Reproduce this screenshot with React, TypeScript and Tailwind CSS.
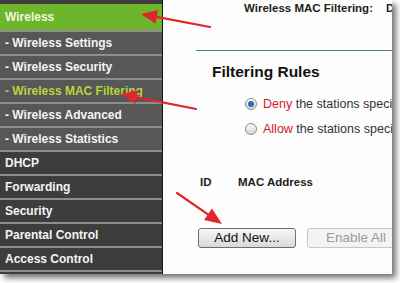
import { FC } from "react";

type Row = { label: string; kind: "sub" | "subActive" | "top" };

const rows: Row[] = [
  { label: "- Wireless Settings", kind: "sub" },
  { label: "- Wireless Security", kind: "sub" },
  { label: "- Wireless MAC Filtering", kind: "subActive" },
  { label: "- Wireless Advanced", kind: "sub" },
  { label: "- Wireless Statistics", kind: "sub" },
  { label: "DHCP", kind: "top" },
  { label: "Forwarding", kind: "top" },
  { label: "Security", kind: "top" },
  { label: "Parental Control", kind: "top" },
  { label: "Access Control", kind: "top" },
];

const rowClass: Record<Row["kind"], string> = {
  sub: "bg-[#575757] text-[#f4f4f4]",
  subActive: "bg-[#575757] text-[#b6d43a]",
  top: "bg-[#3d3d3d] text-[#f4f4f4]",
};

const Sidebar: FC = () => (
  <div className="w-[163px] shrink-0 flex flex-col bg-[#3d3d3d] border-r border-[#151515]">
    <div className="h-[4px]" />
    <div className="h-[26px] pl-[5px] flex items-center bg-[#6cb52d] text-[12px] font-bold text-[#eef7dc]">
      Wireless
    </div>
    {rows.map((r) => (
      <div key={r.label}>
        <div className="h-[2px] bg-[#8e8e8e]" />
        <div
          className={`h-[22px] pl-[5px] flex items-center text-[12px] font-bold whitespace-nowrap ${rowClass[r.kind]}`}
        >
          {r.label}
        </div>
      </div>
    ))}
    <div className="h-[2px] bg-[#8e8e8e]" />
  </div>
);

const Radio: FC<{ checked?: boolean }> = ({ checked }) => (
  <div className="w-[12px] h-[12px] shrink-0 rounded-full border border-[#8a8a8a] bg-linear-to-b from-[#fbfbfb] to-[#d6d6d6] flex items-center justify-center">
    {checked && <div className="w-[6px] h-[6px] rounded-full bg-[#2f6db5]" />}
  </div>
);

// text runs past the frame edge in the original screenshot, so it is clipped here too
const Content: FC = () => (
  <div className="flex-1 min-w-0 overflow-hidden flex flex-col bg-[#fdfdfd] text-[#333]">
    <div className="h-[17px] pl-[81px] whitespace-nowrap text-[11.5px] leading-[17px] font-bold text-[#222]">
      Wireless MAC Filtering:<span className="ml-[13px]">Disabled</span>
    </div>
    <div className="mt-[33px] ml-[33px] h-px bg-[#3b8f58]" />
    <div className="mt-[11px] ml-[49px] text-[15.5px] leading-[20px] font-bold text-[#111] whitespace-nowrap">
      Filtering Rules
    </div>
    <div className="mt-[12px] ml-[82px] h-[20px] flex items-center gap-[6px] whitespace-nowrap text-[12.5px]">
      <Radio checked />
      <span>
        <span className="text-[#cc2027]">Deny</span> the stations specified by any enabled entries in the list
      </span>
    </div>
    <div className="mt-[5px] ml-[82px] h-[20px] flex items-center gap-[6px] whitespace-nowrap text-[12.5px]">
      <Radio />
      <span>
        <span className="text-[#cc2027]">Allow</span> the stations specified by any enabled entries in the list
      </span>
    </div>
    <div className="mt-[34px] ml-[37px] h-[20px] flex items-center text-[11.5px] font-bold text-[#222] whitespace-nowrap">
      <span className="w-[38px]">ID</span>
      <span>MAC Address</span>
    </div>
    <div className="mt-[35px] ml-[35px] flex whitespace-nowrap text-[13.5px]">
      <div className="w-[98px] h-[20px] shrink-0 rounded-[3px] border border-[#6f6f6f] bg-linear-to-b from-[#f7f7f7] to-[#d9d9d9] flex items-center justify-center text-[#111]">
        Add New...
      </div>
      <div className="ml-[11px] w-[110px] h-[20px] shrink-0 rounded-[3px] border border-[#c6c6c6] bg-[#f3f3f3] pl-[18px] flex items-center text-[#9b9b9b]">
        Enable All
      </div>
    </div>
  </div>
);

const Arrow: FC<{ x1: number; y1: number; x2: number; y2: number; len?: number; half?: number }> = ({
  x1,
  y1,
  x2,
  y2,
  len = 16,
  half = 7,
}) => {
  const d = Math.hypot(x2 - x1, y2 - y1);
  const ux = (x2 - x1) / d;
  const uy = (y2 - y1) / d;
  const bx = x2 - ux * len;
  const by = y2 - uy * len;
  const px = -uy * half;
  const py = ux * half;
  return (
    <g>
      <line x1={x1} y1={y1} x2={bx + ux * 3} y2={by + uy * 3} stroke="#e0262b" strokeWidth={2.2} strokeLinecap="round" />
      <polygon points={`${x2},${y2} ${bx + px},${by + py} ${bx - px},${by - py}`} fill="#e0262b" />
    </g>
  );
};

const App: FC = () => {
  return (
    <div className="relative w-[400px] h-[283px] bg-white overflow-hidden font-['Liberation_Sans',Arial,sans-serif]">
      <div className="w-[392px] h-[274px] flex overflow-hidden shadow-[4px_4px_6px_rgba(0,0,0,0.55)]">
        <Sidebar />
        <Content />
      </div>
      <svg className="absolute inset-0 pointer-events-none" width="400" height="283" viewBox="0 0 400 283">
        <Arrow x1={210} y1={27} x2={141} y2={14} />
        <Arrow x1={196} y1={109} x2={121} y2={94} />
        <Arrow x1={177} y1={193} x2={222} y2={224} len={17} />
      </svg>
    </div>
  );
};

export default App;
